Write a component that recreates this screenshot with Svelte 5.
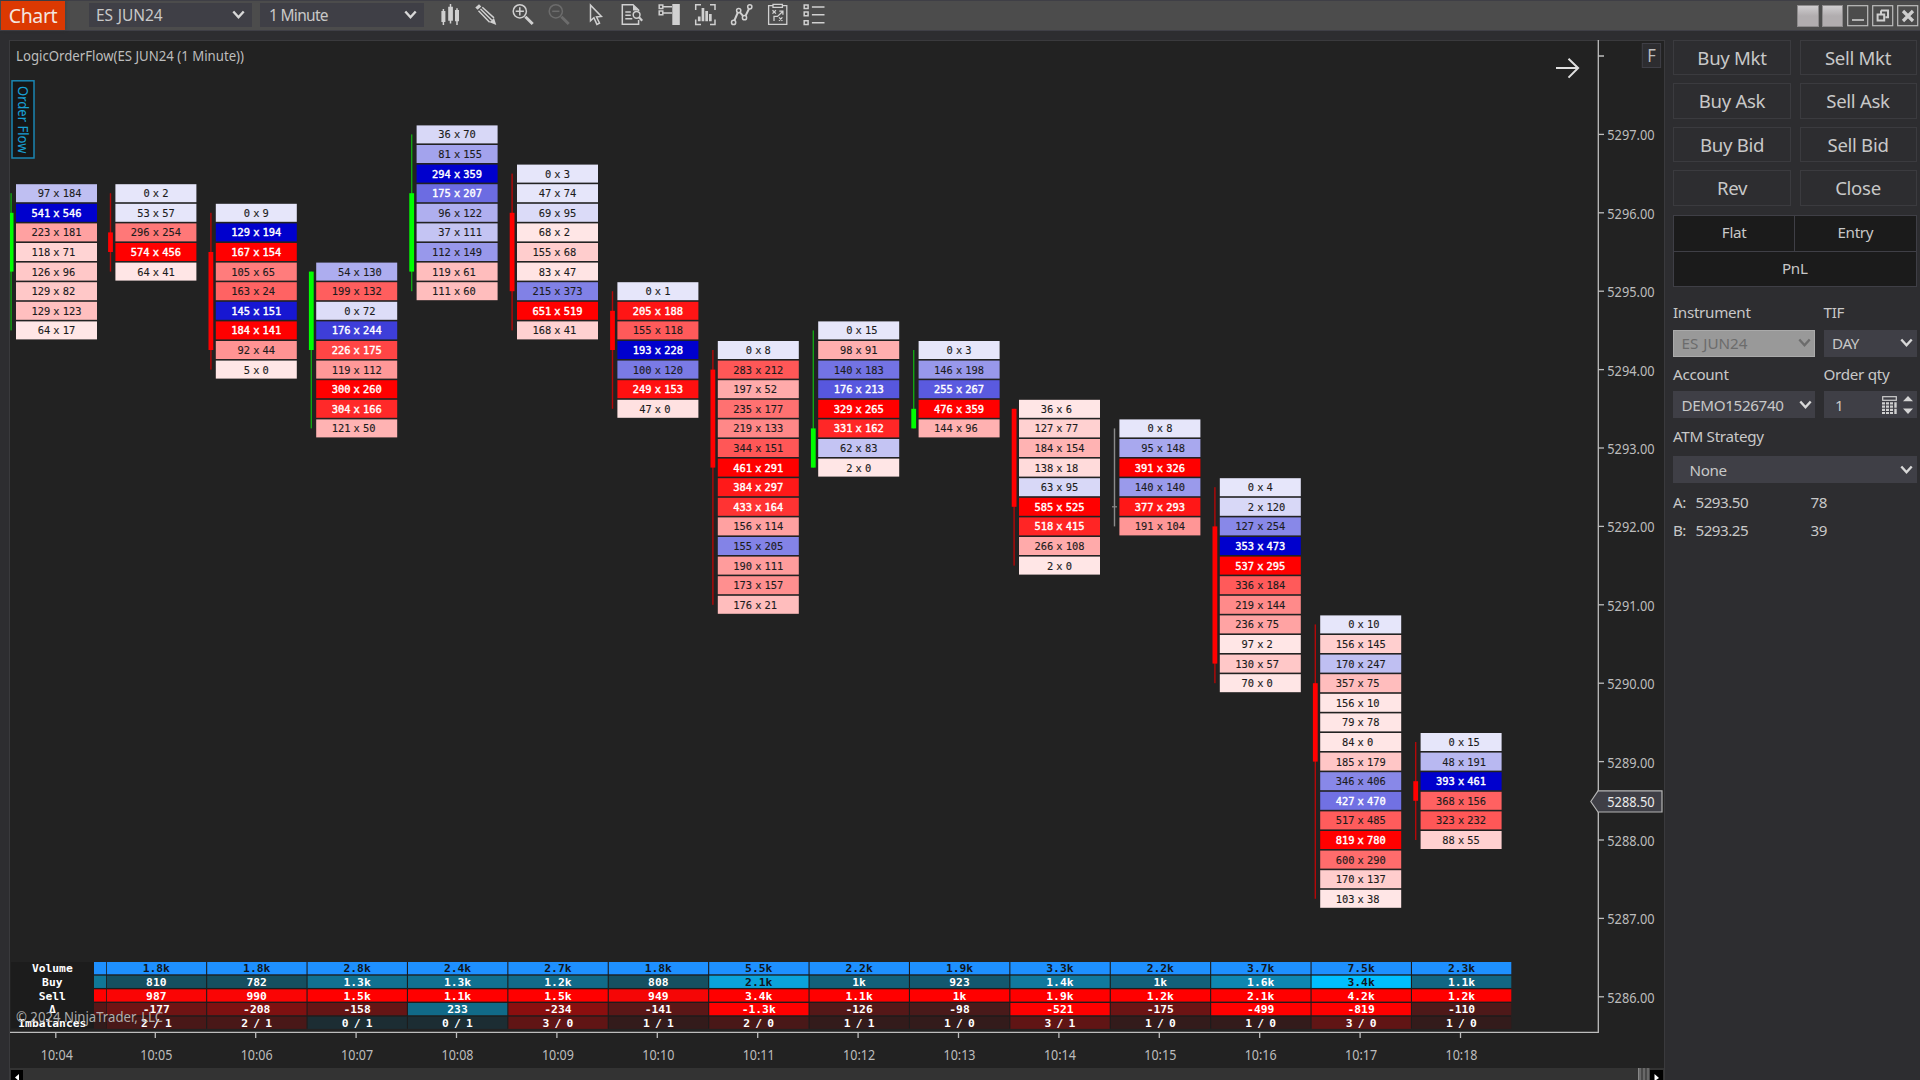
<script>
  // Price ladder geometry: one tick is 0.25 points
  const TOP = 134.4;
  const TICK = 19.6;
  const PITCH = 100.4;
  const CHAR = 6.27;

  // top: ticks below 5297.00; body: first and last row covered by the candle body
  // each cell is "bid ask side+strength(0-100)"
  const bars = [
    { t: '10:04', top: 3, dir: 'up', body: [1, 4], cells: '97 184 b17|541 546 b100|223 181 r30|118 71 r8|126 96 r13|129 82 r13|129 123 r17|64 17 r0' },
    { t: '10:05', top: 3, dir: 'down', body: [2, 3], cells: '0 2 b0|53 57 b0|296 254 r48|574 456 r100|64 41 r0' },
    { t: '10:06', top: 4, dir: 'down', body: [2, 7], cells: '0 9 b0|129 194 b100|167 154 r100|105 65 r46|163 24 r57|145 151 b90|184 141 r100|92 44 r36|5 0 r0' },
    { t: '10:07', top: 7, dir: 'up', body: [0, 4], cells: '54 130 b25|199 132 r59|0 72 b4|176 244 b73|226 175 r70|119 112 r34|300 260 r100|304 166 r82|121 50 r22' },
    { t: '10:08', top: 0, dir: 'up', body: [3, 7], cells: '36 70 b6|81 155 b29|294 359 b100|175 207 b53|96 122 b24|37 111 b15|112 149 b34|119 61 r18|111 60 r18' },
    { t: '10:09', top: 2, dir: 'down', body: [2, 6], cells: '0 3 b0|47 74 b0|69 95 b5|68 2 r0|155 68 r11|83 47 r1|215 373 b44|651 519 r100|168 41 r9' },
    { t: '10:10', top: 8, dir: 'down', body: [1, 3], cells: '0 1 b0|205 188 r91|155 118 r61|193 228 b100|100 120 b47|249 153 r93|47 0 r2' },
    { t: '10:11', top: 11, dir: 'down', body: [1, 6], cells: '0 8 b0|283 212 r62|197 52 r26|235 177 r51|219 133 r41|344 151 r62|461 291 r100|384 297 r89|433 164 r78|156 114 r30|155 205 b43|190 111 r32|173 157 r38|176 21 r18' },
    { t: '10:12', top: 10, dir: 'up', body: [5, 7], cells: '0 15 b0|98 91 r24|140 183 b50|176 213 b62|329 265 r100|331 162 r83|62 83 b15|2 0 r0' },
    { t: '10:13', top: 11, dir: 'up', body: [3, 4], cells: '0 3 b0|146 198 b34|255 267 b61|476 359 r100|144 96 r23' },
    { t: '10:14', top: 14, dir: 'down', body: [0, 5], cells: '36 6 r0|127 77 r9|184 154 r22|138 18 r5|63 95 b6|585 525 r100|518 415 r84|266 108 r26|2 0 r0' },
    { t: '10:15', top: 15, dir: 'flat', body: [4, 4], cells: '0 8 b0|95 148 b27|391 326 r100|140 140 b33|377 293 r90|191 104 r35' },
    { t: '10:16', top: 18, dir: 'down', body: [2, 9], cells: '0 4 b0|2 120 b6|127 254 b41|353 473 b100|537 295 r100|336 184 r61|219 144 r40|236 75 r29|97 2 r0|130 57 r13|70 0 r0' },
    { t: '10:17', top: 25, dir: 'down', body: [3, 7], cells: '0 10 b0|156 145 r10|170 247 b17|357 75 r18|156 10 r0|79 78 r0|84 0 r0|185 179 r14|346 406 b41|427 470 b51|517 485 r60|819 780 r100|600 290 r53|170 137 r11|103 38 r0' },
    { t: '10:18', top: 31, dir: 'down', body: [2, 3], cells: '0 15 b0|48 191 b20|393 461 b100|368 156 r58|323 232 r62|88 55 r9' }
  ].map((b, i) => ({
    ...b,
    x: i === 0 ? 16 : 115.4 + (i - 1) * PITCH,
    rows: b.cells.split('|').map((c) => {
      const [bid, ask, s] = c.split(' ');
      return { bid, ask, side: s[0], k: +s.slice(1) / 100 };
    })
  }));

  const mix = (a, b, k) => `rgb(${a.map((v, i) => Math.round(v + (b[i] - v) * k)).join(',')})`;
  const shade = (c) =>
    c.side === 'b' ? mix([230, 230, 250], [0, 0, 205], c.k) : mix([255, 230, 230], [255, 0, 0], c.k);
  const light = (c) => (c.side === 'b' ? c.k > 0.505 : c.k > 0.65);
  const rowY = (b, r) => TOP + (b.top + r) * TICK;

  const wick = { up: '#12a512', down: '#b40808', flat: '#8a8a8a' };
  const fill = { up: '#00ff00', down: '#ff0000', flat: '#8a8a8a' };

  const prices = Array.from({ length: 12 }, (_, i) => ({ label: `${5297 - i}.00`, y: TOP + i * 78.4 }));

  const BLUE = '#1e90ff';
  const RED = '#ff0000';
  const stat = (list) => list.split('|').map((s) => s.split('#')).map(([v, c]) => ({ v, c: '#' + c }));
  const solid = (list, c) => list.split(' ').map((v) => ({ v, c }));
  const summary = [
    { name: 'Volume', edge: BLUE, dark: true, items: solid('1.8k 1.8k 2.8k 2.4k 2.7k 1.8k 5.5k 2.2k 1.9k 3.3k 2.2k 3.7k 7.5k 2.3k', BLUE) },
    { name: 'Buy', edge: '#107797', items: stat('810#154f60|782#154f60|1.3k#107191|1.3k#107191|1.2k#116b8a|808#155061|2.1k#0aa3da|1k#12607a|923#13586f|1.4k#10799e|1k#12607a|1.6k#0e87b1|3.4k#00bfff|1.1k#116683') },
    { name: 'Sell', edge: RED, items: stat('987#fa0505|990#fa0505|1.5k#ff0000|1.1k#ff0000|1.5k#ff0000|949#f50606|3.4k#ff0000|1.1k#ff0000|1k#ff0000|1.9k#ff0000|1.2k#ff0000|2.1k#ff0000|4.2k#ff0000|1.2k#ff0000') },
    { name: 'Δ', edge: '#571717', items: stat('-177#6f1414|-208#7e1111|-158#651515|233#116a88|-234#8b0f0f|-141#5b1717|-1.3k#ff0000|-126#551818|-98#491a1a|-521#ff0000|-175#6c1414|-499#ff0000|-819#ff0000|-110#4e1919') },
    { name: 'Imbalances', edge: '#321b1b', items: stat('2 / 1#491818|2 / 1#491818|0 / 1#1c2d33|0 / 1#1c2d33|3 / 0#601515|1 / 1#331b1b|2 / 0#491818|1 / 1#331b1b|1 / 0#331b1b|3 / 1#601515|1 / 0#331b1b|1 / 0#331b1b|3 / 0#601515|1 / 0#331b1b') }
  ];

  const orders = ['Buy Mkt', 'Sell Mkt', 'Buy Ask', 'Sell Ask', 'Buy Bid', 'Sell Bid', 'Rev', 'Close'];
</script>

{#snippet chevron()}
  <svg class="chev" width="13" height="10" viewBox="0 0 13 10"><path d="M1.3 1.5 6.5 7.3 11.7 1.5" /></svg>
{/snippet}

<div class="window">
  <header>
    <div class="tab">Chart</div>
    <div class="pick first"><span>ES JUN24</span>{@render chevron()}</div>
    <div class="pick"><span>1 Minute</span>{@render chevron()}</div>
    <nav class="tools">
      <svg viewBox="0 0 24 24"><path class="f" d="M3.4 8h4v11h-4zM10.2 3.7h4.7v14h-4.7zM17 7h4v11.3h-4z" /><path d="M5.4 6v16M12.5 1v19.5M19 5.2V22" /></svg>
      <svg viewBox="0 0 24 24"><path class="f" d="M1.3 4.5 5 1.2l2.3 2.2-3.7 3.4zM22.3 22l-6.7-2.7 4.4-4.4z" /><path d="M4.5 7.7 15.6 19.3M8.3 4.2 20 14.9M6.5 6l11.3 11.2" /></svg>
      <svg viewBox="0 0 24 24"><circle cx="8.8" cy="8.3" r="6.6" /><path d="M8.8 4.2v8.2M4.7 8.3h8.2" /><path class="thick" d="m14.4 13.7 7.3 7.3" /></svg>
      <svg class="off" viewBox="0 0 24 24"><circle cx="8.8" cy="8.3" r="6.6" /><path d="M5.2 8.3h7.2" /><path class="thick" d="m14.4 13.7 7.3 7.3" /></svg>
      <svg viewBox="0 0 24 24"><path d="M6.5 2.2v15.6l3.4-3 3 6.6 2.6-1.2-3-6.3 4.9-.5z" /></svg>
      <svg viewBox="0 0 24 24"><path d="M18.6 8V7L13 1.7H2.3v19.6h16.3V17" /><path class="f" d="M13 1.5v6h5.8z" /><path d="M5.3 9h5.5M5.3 12.3h5.5M5.3 15.8h7" /><circle cx="16.6" cy="11.8" r="3.4" /><path d="m19 14.3 3.2 3.5" stroke-width="2.2" /></svg>
      <svg viewBox="0 0 24 24"><path d="M2.2 1.9h3.6v3.6H2.2zM2.2 8.1h3.6v3.6H2.2zM6 3.7h9M6 10h9" /><path class="f" d="M15.3 1h7.5v21h-7.5z" /></svg>
      <svg viewBox="0 0 24 24"><path d="M8 1.8H2.7V7M17 1.8h5V7M8 21.5H2.7v-5M17 21.5h5v-5" /><path class="f" d="M4.9 13.5h2.7v4.7H4.9zM8.6 5h2.7v13.2H8.6zM12.3 8h2.7v10.2h-2.7zM16 11h2.7v7.2H16z" /></svg>
      <svg viewBox="0 0 24 24"><path class="mid" d="m4.4 17.5 3.4-8M10 9.4l3.2 3.8M15.5 12.9l3.5-7.2" /><circle cx="3.6" cy="19.4" r="2.1" /><circle cx="8.7" cy="7.6" r="2.1" /><circle cx="14.5" cy="14.7" r="2.1" /><circle cx="19.8" cy="3.8" r="2.1" /></svg>
      <svg viewBox="0 0 24 24"><path d="M7 2.7H2.6v18.7h18.2V2.7h-4.3M7 1.4h9.4v3H7zM6.5 7.2l3.4 3.4m0-3.4-3.4 3.4M13 14.4l3.4 3.4m0-3.4L13 17.8M8 18v-4.6h3.5l5.2-4.9M13.3 8.2h3.6v3.5" stroke-width="1.3" /></svg>
      <svg viewBox="0 0 24 24"><path d="M2.2 1.9h3.9v3.7H2.2zM2.2 9.1h3.9v3.7H2.2zM2.2 17.7h3.9v3.7H2.2z" /><path d="M9.9 4h12.6M9.9 11.8h12.6M9.9 19.8h12.6" stroke-width="1.6" /></svg>
    </nav>
    <div class="winbtns">
      <i class="plate"></i><i class="plate"></i>
      <svg viewBox="0 0 22 22"><rect x=".7" y=".7" width="20" height="20" /><path d="M5 15h12" stroke-width="1.6" /></svg>
      <svg viewBox="0 0 22 22"><rect x=".7" y=".7" width="20" height="20" /><path d="M9 5.6h7v6.7h-2.5M9 5.6v3M5.6 9.4h6.6v6.2H5.6z" stroke-width="2" /></svg>
      <svg viewBox="0 0 22 22"><rect x=".7" y=".7" width="20" height="20" /><path d="m6 6 10 10M16 6 6 16" stroke-width="3.2" /></svg>
    </div>
  </header>

  <div class="main">
    <section class="chart">
      <svg class="canvas" width="1654" height="1028" viewBox="10 40 1654 1028">
        <text class="ui" x="16" y="61" textLength="228" lengthAdjust="spacingAndGlyphs" font-size="14.5">LogicOrderFlow(ES JUN24 (1 Minute))</text>
        <rect x="12" y="80.8" width="22" height="77.2" fill="#161616" stroke="#1b86b3" stroke-width="1.5" />
        <text class="ui side" transform="translate(18.4 86) rotate(90)" x="0" y="0" textLength="67.5" lengthAdjust="spacingAndGlyphs" font-size="14">Order Flow</text>

        {#each bars as b}
          {@const cx = b.x + 40.5}
          {@const wx = b.x - 4.9}
          <rect x={wx - 0.7} y={rowY(b, 0)} width="1.4" height={(b.rows.length - 1) * TICK} fill={wick[b.dir]} />
          {#if b.dir === 'flat'}
            <rect x={wx - 2.5} y={rowY(b, b.body[0]) - 0.6} width="5" height="1.2" fill={fill.flat} />
          {:else}
            <rect x={wx - 2.4} y={rowY(b, b.body[0])} width="4.8" height={(b.body[1] - b.body[0]) * TICK} fill={fill[b.dir]} />
          {/if}
          {#each b.rows as c, r}
            <rect x={b.x} y={rowY(b, r) - 9} width="81" height="18" fill={shade(c)} />
            <text class="cell" class:light={light(c)} x={cx - (c.bid.length + 0.5) * CHAR - 3.1} y={rowY(b, r) + 3.9}>{c.bid} x {c.ask}</text>
          {/each}
        {/each}

        <rect x="11" y="962" width="1500" height="66.5" fill="#1c1c1c" />
        {#each summary as s, r}
          {@const y = 962 + r * 13.65}
          <rect x="94" {y} width="12" height="12.3" fill={s.edge} />
          {#each s.items as it, i}
            <rect x={106.8 + i * PITCH} {y} width="99.3" height="12.3" fill={it.c} />
            <text class="stat" class:dark={s.dark || (r === 1 && (it.v === '2.1k' || it.v === '3.4k'))} x={156.3 + i * PITCH} y={y + 10.4}>{it.v}</text>
          {/each}
          <text class="stat" x="52.3" y={y + 10.4}>{s.name}</text>
        {/each}
        <text class="ui" x="16" y="1022" textLength="147" lengthAdjust="spacingAndGlyphs" font-size="14.3" opacity=".9">© 2024 NinjaTrader, LLC</text>

        <path class="axis" d="M1598.3 40V1032.4H10M1598 56h6" />
        {#each prices as p}
          <path class="axis" d="M1598 {p.y}h6" />
          <text class="ui" x="1607.3" y={p.y + 6} textLength="47.3" lengthAdjust="spacingAndGlyphs" font-size="14">{p.label}</text>
        {/each}
        {#each bars as b, i}
          {@const tx = i === 0 ? 55.8 : 155.3 + (i - 1) * PITCH}
          <path class="axis" d="M{tx} 1033v5" />
          <text class="ui" x={tx - 15} y="1059.6" textLength="32" lengthAdjust="spacingAndGlyphs" font-size="14">{b.t}</text>
        {/each}

        <path d="M1590.8 801.5 1598 790.8H1662V812H1598z" fill="#3f3f46" stroke="#b4b4b4" stroke-width="1.2" />
        <text class="ui bright" x="1607.3" y="807.3" textLength="47.3" lengthAdjust="spacingAndGlyphs" font-size="14">5288.50</text>
        <path d="M1556 68h22M1568.5 58.8l9.6 9.2-9.6 9.6" fill="none" stroke="#e0e0e0" stroke-width="2" />
        <rect x="1642.3" y="43.5" width="18.3" height="24" fill="#2d2d30" stroke="#3f3f46" />
        <text class="ui" x="1647.3" y="62.3" font-size="17.5" textLength="8.6" lengthAdjust="spacingAndGlyphs">F</text>
      </svg>
      <div class="scroll">
        <svg width="12" height="10" viewBox="0 0 12 10"><rect width="12" height="10" fill="#000" /><path d="M4 7.5 8 4v7z" fill="#fff" /></svg>
        <span class="grip"></span>
        <svg width="13" height="10" viewBox="0 0 13 10"><rect width="13" height="10" fill="#000" /><path d="M4.5 4v7L9 8z" fill="#fff" /></svg>
      </div>
    </section>

    <aside>
      <div class="orders">
        {#each orders as o}<button>{o}</button>{/each}
      </div>
      <div class="position">
        <span>Flat</span><span>Entry</span><span class="pnl">PnL</span>
      </div>
      <div class="form">
        <label for="ins">Instrument</label><label for="tif">TIF</label>
        <div class="box muted" id="ins"><span>ES JUN24</span>{@render chevron()}</div>
        <div class="box" id="tif"><span>DAY</span>{@render chevron()}</div>
        <label class="second" for="acc">Account</label><label class="second" for="qty">Order qty</label>
        <div class="box acct" id="acc"><span>DEMO1526740</span>{@render chevron()}</div>
        <div class="box qty" id="qty">
          <span>1</span>
          <svg width="15" height="18" viewBox="0 0 15 18"><rect x=".7" y=".7" width="13.6" height="3.6" fill="none" stroke="#d0d0d0" stroke-width="1.2" /><path d="M0 7.4h11.4M0 10.6h11.4M0 13.8h11.4M0 17h11.4" stroke="#d0d0d0" stroke-width="2.2" stroke-dasharray="3 1" /><path d="M13.5 6.3v5.4M13.5 12.7V18" stroke="#d0d0d0" stroke-width="2.4" /></svg>
          <svg width="10" height="20" viewBox="0 0 10 20"><path d="M0 6.3 5 1l5 5.3zM0 13.6h10L5 19z" fill="#d4d4d4" /></svg>
        </div>
        <label class="wide third" for="atm">ATM Strategy</label>
        <div class="box wide none" id="atm"><span>None</span>{@render chevron()}</div>
      </div>
      <div class="quotes">
        <span>A:</span><span>5293.50</span><span>78</span>
        <span>B:</span><span>5293.25</span><span>39</span>
      </div>
    </aside>
  </div>
</div>

<style>
  :global(body) { background: #2d2d30; overflow: hidden; }
  .window {
    width: 1920px; height: 1080px; box-sizing: border-box; overflow: hidden;
    display: flex; flex-direction: column; background: #2d2d30;
    color: #c8c8c8; font-family: 'Noto Sans', 'Open Sans', sans-serif;
  }
  header {
    height: 31px; flex: none; box-sizing: border-box; display: flex; align-items: flex-start;
    background: #4c4c4c; border-top: 1px solid #3f3f46; border-bottom: 1px solid #3f3f46; padding-left: 1px;
  }
  .tab {
    width: 64px; height: 29px; background: #dc3902; color: #f4e6e0; font-size: 19.5px; line-height: 30px;
    text-align: center; letter-spacing: -0.4px; margin-right: 24px; box-shadow: 1px 0 3px #3337;
  }
  .pick {
    width: 164px; height: 24px; margin-top: 2px; margin-right: 7px; padding: 0 7px 1px 9px; box-sizing: border-box;
    display: flex; align-items: center; justify-content: space-between; background: #3f3f46;
    font-size: 15.5px; letter-spacing: -0.7px;
  }
  .pick.first { padding-left: 7px; margin-right: 8px; width: 163px; letter-spacing: -0.1px; word-spacing: 1px; }
  .chev { fill: none; stroke: #d8d8d8; stroke-width: 2.4; }
  .tools { display: flex; gap: 12.45px; margin: 2px 0 0 7px; }
  .tools svg { width: 24px; height: 24px; fill: none; stroke: #d0d0d0; stroke-width: 1.5; }
  .tools .f { fill: #d0d0d0; stroke: none; }
  .tools .mid { stroke-width: 2; }
  .tools .thick { stroke-width: 3; }
  .tools .off { stroke: #6c6c6c; }
  .winbtns { margin-left: auto; display: flex; gap: 3.2px; padding: 4px 1px 0 0; }
  .winbtns svg { width: 22px; height: 22px; fill: none; stroke: #cfcfcf; }
  .winbtns rect { stroke: #bdbdbd; stroke-width: 1.2; }
  .plate { width: 21.5px; height: 22px; border: 1px solid #8d8b8c; background: linear-gradient(#cfcdcf, #b1adaf 50%); box-sizing: border-box; }
  .main { flex: 1; display: flex; padding: 9px 3px 0 9px; min-height: 0; }
  .chart {
    width: 1656px; flex: none; box-sizing: border-box; display: flex; flex-direction: column;
    background: #222; border: solid #3a3a3d; border-width: 1px 1px 0;
  }
  .canvas { display: block; flex: none; margin-top: -1px; }
  .ui { fill: #bdbdbd; }
  .ui.bright { fill: #ececec; }
  .ui.side { fill: #18a0d4; }
  .axis { fill: none; stroke: #bdbdbd; stroke-width: 1.3; }
  .cell { font: 10.42px 'DejaVu Sans Mono', monospace; word-spacing: -3.15px; fill: #1c1c1c; stroke: #1c1c1c; stroke-width: 0.12px; }
  .cell.light { fill: #fff; stroke: #fff; stroke-width: 0.4px; }
  .stat { font: 700 11.3px 'DejaVu Sans Mono', monospace; word-spacing: -1.6px; fill: #fff; text-anchor: middle; }
  .stat.dark { fill: #10161c; }
  .scroll { flex: 1; display: flex; justify-content: flex-end; align-items: flex-end; background: #333; padding: 0 1px; }
  .scroll svg { flex: none; }
  .scroll svg:first-child { margin-right: auto; }
  .grip { width: 11px; height: 12px; border-left: 1px solid #888; background: repeating-linear-gradient(90deg, #686868 0 2px, #484848 2px 4px); }

  aside { flex: 1; padding-left: 8px; display: flex; flex-direction: column; font-size: 15.2px; letter-spacing: -0.3px; }
  .orders { display: grid; grid-template-columns: 118px 117px; column-gap: 8.5px; row-gap: 8.2px; }
  button {
    height: 35.3px; padding: 0 0 1px; border: 1px solid #3b3b3f; background: #2d2d30; color: #c8c8c8;
    font: 18.6px 'Noto Sans', 'Open Sans', sans-serif; letter-spacing: -0.3px; line-height: 31px;
  }
  .position {
    margin-top: 9.5px; width: 243.5px; height: 71.5px; box-sizing: border-box; border: 1px solid #3f3f46; background: #3f3f46;
    display: grid; grid-template-columns: 1fr 1fr; grid-template-rows: 1fr 1fr; gap: 1px;
  }
  .position span { background: #1b1b1b; display: flex; align-items: center; justify-content: center; padding-bottom: 2px; }
  .position .pnl { grid-column: 1 / 3; }
  .form { margin-top: 13px; display: grid; grid-template-columns: 142px 93px; column-gap: 8.5px; }
  label { height: 30px; line-height: 24px; }
  label.second { height: 34.5px; line-height: 35px; }
  label.third { height: 38px; line-height: 37px; }
  .wide { grid-column: 1 / 3; }
  .box {
    height: 27px; box-sizing: border-box; background: #3f3f46; display: flex; align-items: center;
    justify-content: space-between; padding: 0 3.5px 0 8.5px; letter-spacing: -0.4px;
  }
  .box.muted { background: #999; border: 1px solid #aaa; color: #6c6c6c; padding-left: 7.5px; letter-spacing: 0; word-spacing: 1px; }
  .box.muted .chev { stroke: #6c6c6c; }
  .box.acct { letter-spacing: -0.35px; }
  .box.none { padding-left: 16.5px; }
  .qty span { margin-right: auto; padding-left: 3px; }
  .qty svg { margin-left: 6px; }
  .quotes { margin-top: 4.5px; display: grid; grid-template-columns: 22.5px 115px 1fr; grid-auto-rows: 28px; align-items: center; letter-spacing: -0.5px; }
</style>
